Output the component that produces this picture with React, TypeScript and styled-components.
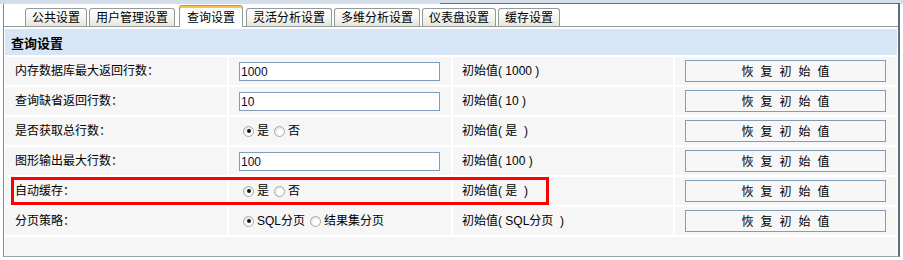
import React from "react";
import styled, { createGlobalStyle, css } from "styled-components";

const GlobalStyle = createGlobalStyle`
  html, body {
    margin: 0;
    padding: 0;
    background: #ffffff;
  }
  body {
    font-family: "Liberation Sans", "Noto Sans CJK SC", sans-serif;
    font-size: 12px;
    color: #000;
  }
`;

const Page = styled.div`
  width: 903px;
  height: 260px;
  overflow: hidden;
`;

const TopBand = styled.div`
  display: flex;
  height: 4px;
  background: #d3deea;
`;

const BandEdge = styled.div`
  margin-left: 440px;
  flex: 1;
  border-bottom: 1px solid #56708e;
  margin-right: 3px;
`;

const Frame = styled.div`
  margin-left: 3px;
  width: 897px;
  height: 253px;
  box-sizing: border-box;
  border-left: 1px solid #7a8a99;
  border-right: 2px solid #5e6e80;
  border-bottom: 1px solid #98a4ac;
  display: flex;
  flex-direction: column;
`;

const TabBar = styled.div`
  height: 23px;
  box-sizing: border-box;
  border-bottom: 1px solid #919b9c;
  display: flex;
  align-items: flex-end;
  gap: 2px;
  padding-left: 21px;
  background: #fff;
`;

const Tab = styled.div<{ $active?: boolean }>`
  height: 18px;
  box-sizing: border-box;
  padding: 0 6px;
  border: 1px solid #919b9c;
  border-bottom: none;
  border-radius: 3px 3px 0 0;
  background: linear-gradient(#ffffff, #f5f4ef 55%, #e7e5dc);
  display: flex;
  align-items: center;
  line-height: 14px;
  white-space: nowrap;
  color: #000;
  ${(p) =>
    p.$active &&
    css`
      height: 22px;
      margin: 0 1px -1px 2px;
      padding: 2px 7px 0;
      background: #fff;
      border-top: 1px solid #e0892b;
      box-shadow: inset 0 2px 0 #fcc24e;
      position: relative;
      z-index: 1;
    `}
`;

const Panel = styled.div`
  flex: 1;
  display: flex;
  flex-direction: column;
  gap: 2px;
  padding: 2px 1px 0;
  background: #fff;
`;

const Header = styled.div`
  height: 26px;
  background: #d6e6f6;
  display: flex;
  align-items: center;
  padding-left: 6px;
  font-family: "Noto Sans CJK SC", sans-serif;
  font-size: 13px;
  font-weight: bold;
`;

const Rows = styled.div`
  display: flex;
  flex-direction: column;
  gap: 2px;
`;

const Row = styled.div`
  position: relative;
  display: grid;
  grid-template-columns: 222px 222px 220px 1fr;
  gap: 2px;
  height: 28px;
`;

const Cell = styled.div<{ $pad?: number }>`
  background: #f6f6f6;
  display: flex;
  align-items: center;
  padding-left: ${(p) => p.$pad ?? 10}px;
  line-height: 14px;
  white-space: pre;
`;

const Filler = styled.div`
  flex: 1;
  background: #f6f6f6;
`;

const TextInput = styled.input`
  width: 201px;
  height: 19px;
  box-sizing: border-box;
  border: 1px solid #7f9db9;
  padding: 0 1px;
  margin: 1px 0 0;
  font-family: "Liberation Sans", sans-serif;
  font-size: 12px;
  color: #0a0a3c;
  background: #fff;
  outline: none;
`;

const ResetButton = styled.button`
  width: 201px;
  height: 22px;
  box-sizing: border-box;
  border: 1px solid #7f9db9;
  background: #f7f7f7;
  font-family: "Noto Sans CJK SC", sans-serif;
  font-size: 12px;
  letter-spacing: 7px;
  padding: 0 0 0 7px;
  color: #000;
  line-height: 14px;
`;

const RadioDot = styled.span<{ $checked?: boolean }>`
  width: 11px;
  height: 11px;
  box-sizing: border-box;
  border-radius: 50%;
  border: 1px solid #a4a9ad;
  background: radial-gradient(circle at 65% 65%, #ffffff 30%, #e2e4e6 80%);
  display: inline-flex;
  align-items: center;
  justify-content: center;
  margin-right: 3px;
  flex: none;
  &::after {
    content: "";
    width: 4px;
    height: 4px;
    border-radius: 50%;
    background: ${(p) => (p.$checked ? "#0d1520" : "transparent")};
  }
`;

const RadioLabel = styled.span`
  margin-right: 5px;
`;

const Highlight = styled.div`
  position: absolute;
  left: 6px;
  top: 0;
  width: 538px;
  height: 28px;
  box-sizing: border-box;
  border: 3px solid #ff0000;
  pointer-events: none;
`;

type Setting = {
  label: string;
  kind: "text" | "radio";
  value: string;
  options?: string[];
  initial: string;
  marked?: boolean;
};

const tabs = ["公共设置", "用户管理设置", "查询设置", "灵活分析设置", "多维分析设置", "仪表盘设置", "缓存设置"];

const settings: Setting[] = [
  { label: "内存数据库最大返回行数：", kind: "text", value: "1000", initial: "初始值( 1000 )" },
  { label: "查询缺省返回行数：", kind: "text", value: "10", initial: "初始值( 10 )" },
  { label: "是否获取总行数：", kind: "radio", value: "是", options: ["是", "否"], initial: "初始值( 是  )" },
  { label: "图形输出最大行数：", kind: "text", value: "100", initial: "初始值( 100 )" },
  { label: "自动缓存：", kind: "radio", value: "是", options: ["是", "否"], initial: "初始值( 是  )", marked: true },
  { label: "分页策略：", kind: "radio", value: "SQL分页", options: ["SQL分页", "结果集分页"], initial: "初始值( SQL分页  )" },
];

export default function App() {
  return (
    <Page>
      <GlobalStyle />
      <TopBand>
        <BandEdge />
      </TopBand>
      <Frame>
        <TabBar>
          {tabs.map((t) => (
            <Tab key={t} $active={t === "查询设置"}>
              {t}
            </Tab>
          ))}
        </TabBar>
        <Panel>
          <Header>查询设置</Header>
          <Rows>
            {settings.map((s) => (
              <Row key={s.label}>
                <Cell>{s.label}</Cell>
                {s.kind === "text" ? (
                  <Cell>
                    <TextInput defaultValue={s.value} />
                  </Cell>
                ) : (
                  <Cell $pad={14}>
                    {s.options!.map((o) => (
                      <React.Fragment key={o}>
                        <RadioDot $checked={o === s.value} />
                        <RadioLabel>{o}</RadioLabel>
                      </React.Fragment>
                    ))}
                  </Cell>
                )}
                <Cell $pad={9}>{s.initial}</Cell>
                <Cell>
                  <ResetButton>恢复初始值</ResetButton>
                </Cell>
                {s.marked && <Highlight />}
              </Row>
            ))}
          </Rows>
          <Filler />
        </Panel>
      </Frame>
    </Page>
  );
}
